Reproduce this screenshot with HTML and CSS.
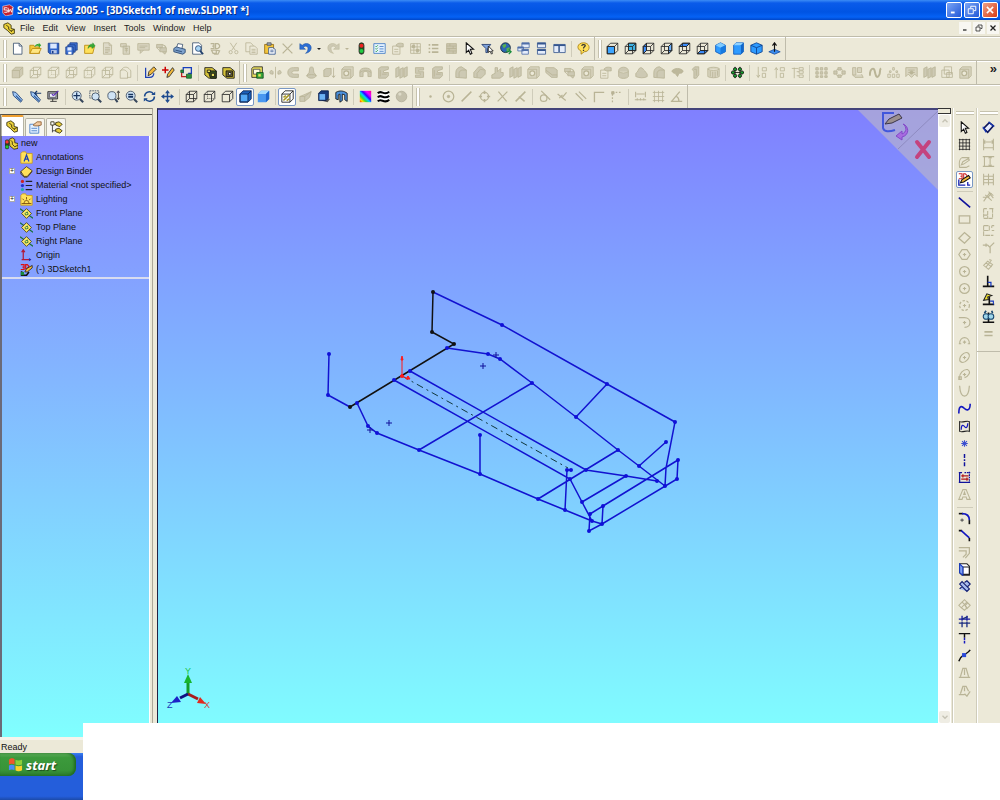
FILE: index.html
```html
<!DOCTYPE html>
<html lang="en">
<head>
  <meta charset="UTF-8">
  <meta name="viewport" content="width=device-width, initial-scale=1.0">
  <title>SolidWorks 2005 - [3DSketch1 of new.SLDPRT *]</title>
  <link rel="stylesheet" href="styles.css">
</head>
<body>
  <!-- Icon set -->
  <svg class="sprite" aria-hidden="true">
    <!-- Files -->
    <symbol id="new" viewBox="0 0 16 16"><path d="M3 1.500h7l3.500 3.500v10H3z" fill="#fff" stroke="#39506e"/><path d="M10 1.500V5h3.500" stroke="#39506e"/></symbol>
    <symbol id="open" viewBox="0 0 16 16"><path d="M1 14V4h5l1 2h6v8z" fill="#f5c83a" stroke="#b8860b"/><path d="M1 14l3-6h11l-3 6z" fill="#ffe680" stroke="#b8860b"/><path d="M7 6c1-4 4-4 5-3V1l3 3-3 3V5c-2-1-3 0-5 1z" fill="#2fa52f" stroke="none"/></symbol>
    <symbol id="openpart" viewBox="0 0 16 16"><path d="M2 14V4h6l1 2h5l-2 8z" fill="#ffe15a" stroke="#b8860b"/><path d="M6 8c1-5 4-6 6-5V1l3 4-4 3V6c-2-1-3 0-5 2z" fill="#35ab35" stroke="#1d7d1d" stroke-width=".5"/></symbol>
    <symbol id="save" viewBox="0 0 16 16"><path d="M1.500 1.500h13v13h-11l-2-2z" fill="#2f63c8" stroke="#173a86"/><path d="M4 2h8v6H4z" fill="#dbe8ff" stroke="none"/><path d="M5 10h7v4H5z" fill="#b9c8e8" stroke="none"/><path d="M6 11h2v3H6z" fill="#173a86" stroke="none"/></symbol>
    <symbol id="saveall" viewBox="0 0 16 16"><g fill="#3f74d6" stroke="#173a86"><path d="M6 1h9v9H6z"/><path d="M3.500 3.500h9v9h-9z"/><path d="M1 6h9v9H1z"/></g><path d="M3 6.500h5v4H3z" fill="#dbe8ff" stroke="none"/><path d="M4 12h4v3H4z" fill="#fff" stroke="none"/></symbol>
    <symbol id="doc" viewBox="0 0 16 16"><path d="M3 1h7l3 3v11H3zM10 1v3h3M5 7h6M5 9h6M5 11h6M5 13h4" fill="#dedac8"/></symbol>
    <symbol id="doc2" viewBox="0 0 16 16"><path d="M2 2h7v4H2zM5 5h8v10H5z" fill="#d8d4c0"/><path d="M7 8h4M7 10h4M9 7v6"/></symbol>
    <symbol id="card" viewBox="0 0 16 16"><path d="M1 2h14v8H1zM3 5h10M3 7h7M4 10v4l4-4" fill="#d8d4c0"/></symbol>
    <symbol id="blocks" viewBox="0 0 16 16"><path d="M2 3h7v4H2zM6 7h8v5H6zM9 3l4 2v2M9 12l3 3 2-3M2 7l4 4" fill="#cdc9b3"/></symbol>
    <symbol id="print" viewBox="0 0 16 16"><path d="M4 8l2-6 6 1-1 5" fill="#fff" stroke="#39506e"/><path d="M1 8l3-2 11 3v4l-3 2L1 12z" fill="#7fa3cd" stroke="#21406b"/><path d="M3 10l8 2" stroke="#21406b"/></symbol>
    <symbol id="preview" viewBox="0 0 16 16"><path d="M2 1h8l3 3v11H2z" fill="#fff" stroke="#39506e"/><circle cx="9" cy="8" r="3.500" fill="#a8d4f5" stroke="#21406b"/><path d="M11 11l4 4" stroke="#21406b" stroke-width="2"/></symbol>
    <symbol id="threed" viewBox="0 0 16 16"><path d="M2 2h4v3H4h2v3H2M8 2h3l2 2v2l-2 2H8zM3 10h6v4H5zM9 10l4 1-2 4H6" stroke-width="1.500"/></symbol>
    <symbol id="cut" viewBox="0 0 16 16"><path d="M4 1l6 9M12 1L6 10"/><circle cx="4.500" cy="12.500" r="2"/><circle cx="11.500" cy="12.500" r="2"/></symbol>
    <symbol id="copy" viewBox="0 0 16 16"><path d="M1 1h6l3 3v8H1z"/><path d="M6 5h6l3 3v7H6z" fill="#ece9d8"/><path d="M8 9h5M8 11h5M8 13h5"/></symbol>
    <symbol id="paste" viewBox="0 0 16 16"><path d="M2 3h11v11H2z" fill="#f2c53b" stroke="#946a10"/><path d="M5 1h5v3H5z" fill="#9aa7bb" stroke="#555"/><path d="M7 7h5l3 2v6H7z" fill="#fff" stroke="#2b4f8c"/><path d="M9 10h4M9 12h4" stroke="#2b4f8c"/></symbol>
    <symbol id="del" viewBox="0 0 16 16"><path d="M2 2l12 12M14 2L2 14" stroke-width="1.600"/></symbol>
    <symbol id="undo" viewBox="0 0 16 16"><path d="M1 2v7h7L5.500 6.500C8 4 11 5 11 8s-1 4-3 6c5-1 7-4 7-7 0-5-7-7-11-3z" fill="#2c6fd6" stroke="#174a9c" stroke-width=".6"/></symbol>
    <symbol id="redo" viewBox="0 0 16 16"><path d="M15 2v7H8l2.500-2.500C8 4 5 5 5 8s1 4 3 6c-5-1-7-4-7-7 0-5 7-7 11-3z" fill="#cdc9b3" stroke-width=".6"/></symbol>
    <symbol id="traffic" viewBox="0 0 16 16"><rect x="5" y="1" width="6" height="14" rx="3" fill="#225522" stroke="#222"/><circle cx="8" cy="4.500" r="2.500" fill="#e22" stroke="none"/><circle cx="8" cy="11" r="2.500" fill="#2c4" stroke="none"/></symbol>
    <symbol id="options" viewBox="0 0 16 16"><path d="M1 2h14v12H1z" fill="#e5f2ff" stroke="#3d77c4"/><path d="M3 5l1 1 2-2M3 8l1 1 2-2M3 11l1 1 2-2" stroke="#1c9c3a"/><path d="M8 5.500h5M8 8.500h5M8 11.500h5" stroke="#3d77c4"/></symbol>
    <symbol id="props" viewBox="0 0 16 16"><path d="M2 5h9v10H2z"/><path d="M6 4c2-3 5-3 9-2v4H9z" fill="#cdc9b3"/><path d="M4 9h5M4 12h5"/></symbol>
    <symbol id="table" viewBox="0 0 16 16"><path d="M2 2h12v12H2zM2 6h12M2 10h12M6 2v12M10 2v12"/><path d="M4 4h3v3H4zM9 9h3v3H9z" fill="currentColor"/></symbol>
    <symbol id="tree" viewBox="0 0 16 16"><path d="M6 3.500h8M6 8h8M6 12.500h8M2 3.500h2M2 8h2M2 12.500h2" stroke-width="2"/></symbol>
    <symbol id="brick" viewBox="0 0 16 16"><path d="M2 2h12v12H2z" fill="#cbc6ae"/><path d="M2 5h12M2 8h12M2 11h12M6 2v3M10 5v3M5 8v3M10 11v3"/></symbol>
    <symbol id="arrow" viewBox="0 0 16 16"><path d="M4 1v12l3-3 2 5 2-1-2-5h4z" fill="#fff" stroke="#111" stroke-width="1.300"/></symbol>
    <symbol id="filter" viewBox="0 0 16 16"><path d="M1 3h11L8 8v5H6V8z" fill="#7fa3dd" stroke="#1c3567"/><path d="M9 5v8l2-2 2 4 1-1-1-3h2z" fill="#fff" stroke="#111"/></symbol>
    <symbol id="globe" viewBox="0 0 16 16"><circle cx="8" cy="7" r="6" fill="#2c66b4" stroke="#123"/><path d="M4 4l4-2 1 3-3 3zM9 8l4-2v4l-3 2z" fill="#56b04e" stroke="none"/><path d="M8 12h7M12 9l3 3-3 3" stroke="#1a8c3c" stroke-width="1.500"/></symbol>
    <symbol id="cascade" viewBox="0 0 16 16"><g fill="#e4ecfa" stroke="#4f6ea8"><path d="M6 1h9v6H6zM1 6h7v5H1zM6 9h8v6H6z"/><path d="M6 2h9M1 7h7M6 10h8" stroke-width="2"/></g></symbol>
    <symbol id="tileh" viewBox="0 0 16 16"><g fill="#e4ecfa" stroke="#35568f"><path d="M3 1h10v6H3zM3 9h10v6H3z"/><path d="M3 2h10M3 10h10" stroke-width="2"/></g></symbol>
    <symbol id="tilev" viewBox="0 0 16 16"><g fill="#e4ecfa" stroke="#35568f"><path d="M1 3h6v10H1zM8 3h7v10H8z"/><path d="M1 4h14" stroke-width="2"/></g></symbol>
    <symbol id="help" viewBox="0 0 16 16"><path d="M8 1c9 0 9 11 1 11l-4 3v-4C-1 9 0 1 8 1z" fill="#ffdf5a" stroke="#a67c0c"/><path d="M6 5c0-3 5-2 4 0-.5 1-2 1-2 3M8 9.500v1.500" stroke="#333" stroke-width="1.500"/></symbol>
    <!-- Standard views -->
    <symbol id="cube" viewBox="0 0 16 16"><path d="M1.500 5.500h9v9h-9zM5.500 1.500h9v9M5.500 1.500v9h9M1.500 5.500l4-4M10.500 5.500l4-4M10.500 14.500l4-4M1.500 14.500l4-4"/></symbol>
    <symbol id="cubesolid" viewBox="0 0 16 16"><path d="M1.500 5.500h9v9h-9zM1.500 5.500l4-4h9v9l-4 4M10.500 5.500l4-4"/></symbol>
    <symbol id="cubehidden" viewBox="0 0 16 16"><path d="M1.500 5.500h9v9h-9zM1.500 5.500l4-4h9v9l-4 4M10.500 5.500l4-4"/><path d="M5.500 2v8.500h9M1.500 14.500l4-4" stroke-dasharray="1 1.500"/></symbol>
    <symbol id="cubegrey" viewBox="0 0 16 16"><path d="M1.500 5.500h9v9h-9zM1.500 5.500l4-4h9v9l-4 4M10.500 5.500l4-4" fill="#cfcab3"/></symbol>
    <symbol id="cubering" viewBox="0 0 16 16"><path d="M1.500 6l4-4c3-1 6-1 9 4v8h-4v1h-9zM1.500 6c3-2 6-2 9 2v7"/></symbol>
    <symbol id="vfront" viewBox="0 0 16 16"><path d="M1.500 5.500h9v9h-9z" fill="#3da5ff"/><path d="M1.500 5.500h9v9h-9zM1.500 5.500l4-4h9v9l-4 4M10.500 5.500l4-4"/></symbol>
    <symbol id="vback" viewBox="0 0 16 16"><path d="M5.500 1.500h9v9h-9z" fill="#3fb4e6"/><use href="#cube"/></symbol>
    <symbol id="vleft" viewBox="0 0 16 16"><path d="M1.500 5.500l4-4v9l-4 4z" fill="#3d90ff"/><use href="#cube"/></symbol>
    <symbol id="vright" viewBox="0 0 16 16"><path d="M10.500 5.500l4-4v9l-4 4z" fill="#6cb2ff"/><use href="#cube"/></symbol>
    <symbol id="vtop" viewBox="0 0 16 16"><path d="M1.500 5.500l4-4h9l-4 4z" fill="#3d90ff"/><use href="#cube"/></symbol>
    <symbol id="vbottom" viewBox="0 0 16 16"><path d="M1.500 14.500l4-4h9l-4 4z" fill="#3d90ff"/><use href="#cube"/></symbol>
    <symbol id="iso" viewBox="0 0 16 16"><path d="M8 1l6 3v8l-6 3-6-3V4z" fill="#2e9bff" stroke="#0b55b8"/><path d="M8 1l6 3-6 3-6-3z" fill="#7fcbff" stroke="none"/><path d="M8 7v8l6-3V4z" fill="#167ae0" stroke="none"/></symbol>
    <symbol id="tri" viewBox="0 0 16 16"><path d="M2 4l3-3h9v11l-3 3H2z" fill="#2e9bff" stroke="#0b55b8"/><path d="M2 4l3-3h9l-3 3z" fill="#8fd2ff" stroke="none"/><path d="M11 4l3-3v11l-3 3z" fill="#1267c8" stroke="none"/></symbol>
    <symbol id="dim" viewBox="0 0 16 16"><path d="M1 4l7-3 7 3v8l-7 3-7-3z" fill="#2e9bff" stroke="#0b3d8a"/><path d="M1 4l7 3 7-3M8 7v8" stroke="#0b3d8a"/></symbol>
    <symbol id="normal" viewBox="0 0 16 16"><path d="M1 12l7-3 7 3-7 3z" fill="#3c8ef0" stroke="#1d4f9c"/><path d="M8 12V2M5.500 4.500L8 1l2.500 3.500" stroke="#111" stroke-width="1.400"/></symbol>
    <!-- Sketch and features -->
    <symbol id="sketch" viewBox="0 0 16 16"><path d="M2 2v12h5c4 0 5-3 5-5" stroke="#1b3fb5" stroke-width="1.500"/><path d="M5 12l1-5 6-6 3 3-6 6z" fill="#f2b93c" stroke="#222"/></symbol>
    <symbol id="sketch3d" viewBox="0 0 16 16"><path d="M0 5h8M4 1v8" stroke="#c00" stroke-width="1.800"/><path d="M6 14l1-4 6-8 2 3-6 8z" fill="#f2b93c" stroke="#222"/></symbol>
    <symbol id="derive" viewBox="0 0 16 16"><path d="M4 9V2h10v7h-4" stroke="#173fbc" stroke-width="1.600"/><path d="M2 7v6h6" stroke="#b22" stroke-width="1.600"/><path d="M8 10h6v5H8zM1 5h3v3H1z" fill="#2a8f3c" stroke="#185f27"/></symbol>
    <symbol id="frameA" viewBox="0 0 16 16"><path d="M1 2h9l5 4v9H6l-5-4z" fill="#d6c33a" stroke="#111"/><path d="M5 6h10v9H8z" fill="#3d551f" stroke="#111"/><path d="M4 5h4v3H4zM9 9h4v4H9z" fill="#e8dc5c" stroke="#111"/></symbol>
    <symbol id="frameB" viewBox="0 0 16 16"><path d="M1 2h9l5 4v9H6l-5-4z" fill="#d6c33a" stroke="#111"/><path d="M5 6h8v7H5z" fill="#6d6530" stroke="#111"/><path d="M8 8h3v3H8z" fill="#fff" stroke="#111"/></symbol>
    <symbol id="extrude" viewBox="0 0 16 16"><path d="M1 3l2-2h11v9l-2 4H1z" fill="#ece15e" stroke="#222"/><path d="M3 4h8v6H3z" fill="#fffbe0" stroke="#444"/><path d="M7 8h8v7H7z" fill="#36a53a" stroke="#104a15"/><path d="M9 10h3v3H9z" fill="#ece15e" stroke="none"/></symbol>
    <symbol id="revolve" viewBox="0 0 16 16"><path d="M8 1v14M3 5c-3 3-3 5 2 5V7zM13 5c3 3 3 5-2 5V7z" fill="#cdc9b3"/></symbol>
    <symbol id="sweep" viewBox="0 0 16 16"><path d="M14 2H8C2 2 1 6 1 8s1 6 7 6h6v-4H9c-4 0-4-4 0-4h5z" fill="#cdc9b3"/></symbol>
    <symbol id="loft" viewBox="0 0 16 16"><path d="M6 2c1-1 3-1 4 0l1 6 3 4c-2 4-10 4-12 0l3-4z" fill="#cdc9b3"/><path d="M2 12c3-2 9-2 12 0"/></symbol>
    <symbol id="thick" viewBox="0 0 16 16"><path d="M1 5l3-2h6v7l-3 3H1zM13 2v12M11 12l2 2 2-2" fill="#cdc9b3"/></symbol>
    <symbol id="hole" viewBox="0 0 16 16"><path d="M1 4l3-3h11v11l-3 3H1zM1 4h11v11" fill="#d8d4bf"/><circle cx="6.500" cy="9" r="3" fill="#ece9d8" stroke-width="1.500"/></symbol>
    <symbol id="arch" viewBox="0 0 16 16"><path d="M1 13V7c0-6 14-6 14 0v6h-4V9c0-3-6-3-6 0v4z" fill="#cdc9b3"/><path d="M1 8c4-3 10-3 14 0"/></symbol>
    <symbol id="cutbox" viewBox="0 0 16 16"><path d="M2 3l3-2h9v3l-6 2v2h6v4l-3 3H2z" fill="#cdc9b3"/><path d="M4 5v8M6 10h6"/></symbol>
    <symbol id="ribs" viewBox="0 0 16 16"><path d="M1 3l4-2v11l-4 2zM6 4l4-2v11l-4 2zM11 3l4-2v11l-4 2z" fill="#cdc9b3"/></symbol>
    <symbol id="sshape" viewBox="0 0 16 16"><path d="M3 2h10v3H7v2h6v7H3v-3h6V9H3z" fill="#cdc9b3"/></symbol>
    <symbol id="fillet" viewBox="0 0 16 16"><path d="M1 14V8c0-4 3-7 7-7l6 4v10z" fill="#cdc9b3"/><path d="M5 14V9c0-2 2-4 4-4h5"/></symbol>
    <symbol id="chamfer" viewBox="0 0 16 16"><path d="M1 14V8l6-7h3l5 4v5l-5 5z" fill="#cdc9b3"/><path d="M5 14V9l4-5 5 1"/></symbol>
    <symbol id="rib" viewBox="0 0 16 16"><path d="M1 11l4-2V2h3v5l4-4v5h3v4l-4 3H1z" fill="#cdc9b3"/></symbol>
    <symbol id="cutcorner" viewBox="0 0 16 16"><path d="M1 2h10l4 3v9H8L1 8z" fill="#cdc9b3"/><path d="M1 5l8 6h6"/></symbol>
    <symbol id="dome" viewBox="0 0 16 16"><path d="M2 6c0-6 12-6 12 0v7c-2 3-10 3-12 0zM2 7c3 2 9 2 12 0" fill="#cdc9b3"/></symbol>
    <symbol id="hill" viewBox="0 0 16 16"><path d="M1 13V9c3-1 3-7 6-7s3 3 5 4l3 4v3c-3 2-10 2-14 0z" fill="#cdc9b3"/></symbol>
    <symbol id="leaf" viewBox="0 0 16 16"><path d="M1 6c4-4 10-4 14 0-1 3-3 3-5 3l-2 4-3-4C3 9 2 8 1 6z" fill="#bdb89b"/></symbol>
    <symbol id="clip" viewBox="0 0 16 16"><path d="M4 4l3-3h5v10l-3 4H6V7z" fill="#cdc9b3"/><path d="M6 4h3v8"/></symbol>
    <symbol id="barrel" viewBox="0 0 16 16"><path d="M1 3c3-2 11-2 14 0v10c-3 2-11 2-14 0zM1 4c3 2 11 2 14 0M4 6v7M7 7v7M10 7v7M13 6v6" fill="#d8d4bf"/></symbol>
    <symbol id="pattern" viewBox="0 0 16 16"><path d="M5 1v14M11 1v14M0 8h16" stroke="#111"/><g fill="#17a32e" stroke="#111"><circle cx="5" cy="4" r="2"/><circle cx="11" cy="4" r="2"/><circle cx="2.500" cy="8" r="2"/><circle cx="13.500" cy="8" r="2"/><circle cx="5" cy="12" r="2"/><circle cx="11" cy="12" r="2"/></g></symbol>
    <symbol id="down" viewBox="0 0 16 16"><path d="M4 1v13M2 11l2 3 2-3M9 2h5v4H9zM9 9h4v5H9z" /></symbol>
    <symbol id="up" viewBox="0 0 16 16"><path d="M4 15V2M2 5l2-3 2 3M9 2h5v4H9zM9 9h4v5H9z"/></symbol>
    <symbol id="updown" viewBox="0 0 16 16"><path d="M1 3h8M4 15V2M7 7h3M7 12h3M10 2h5v3h-5zM10 6h5v3h-5zM10 11h5v3h-5z"/></symbol>
    <symbol id="dots" viewBox="0 0 16 16"><path d="M1 2h3v3H1zM6.500 2h3v3h-3zM12 2h3v3h-3zM1 7h3v3H1zM6.500 7h3v3h-3zM12 7h3v3h-3zM1 12h3v2H1zM6.500 12h3v2h-3zM12 12h3v2h-3z" fill="#cdc9b3"/></symbol>
    <symbol id="ring" viewBox="0 0 16 16"><path d="M6 2h4v3H6zM6 11h4v3H6zM1 6h4v4H1zM11 6h4v4h-4zM4 5l2-1M12 5l-2-1M4 11l2 1M12 11l-2 1" fill="#cdc9b3"/></symbol>
    <symbol id="mirror" viewBox="0 0 16 16"><path d="M2 2h4v9H2zM8 2h5v6H8zM2 11l3 3h10l-2-4" fill="#d8d4bf"/></symbol>
    <symbol id="curve" viewBox="0 0 16 16"><path d="M1 12C1 3 6 1 7 6s2 10 5 6 0-8 3-9" stroke-width="2.500"/></symbol>
    <symbol id="peaks" viewBox="0 0 16 16"><path d="M1 10h3v4H1zM6.500 10h3v4h-3zM12 10h3v4h-3zM3 6h2v2H3zM11 6h2v2h-2zM7 2h2v3H7z"/></symbol>
    <symbol id="fill" viewBox="0 0 16 16"><path d="M1 2h14v11l-3-3-4 4-4-4-3 3zM4 5h8M4 8h8" fill="#d8d4bf"/><circle cx="8" cy="8" r="2" fill="currentColor"/></symbol>
    <symbol id="stack" viewBox="0 0 16 16"><path d="M4 1h9v9H4zM1 5h9v9H1zM7 8h7v6H7z"/></symbol>
    <!-- View toolbar -->
    <symbol id="torch" viewBox="0 0 16 16"><path d="M2 2l4 1 8 9-2 3-9-8z" fill="#9ec6f5" stroke="#17396e"/><path d="M6 7l6 6" stroke="#2e5c9c" stroke-width="1.500"/></symbol>
    <symbol id="torchback" viewBox="0 0 16 16"><use href="#torch"/><path d="M7 4h8M10 1L7 4l3 3" stroke="#17396e" stroke-width="1.500"/></symbol>
    <symbol id="monitor" viewBox="0 0 16 16"><path d="M1 2h12v9H1zM4 14h8M7 11v3" fill="#a6a8b6" stroke="#222"/><path d="M3 4h8v5H3z" fill="#eef" stroke="#555"/><path d="M8 7l6-6M6 5l2 2" stroke="#5a2bb5" stroke-width="1.500"/></symbol>
    <symbol id="zoomfit" viewBox="0 0 16 16"><circle cx="7" cy="7" r="5.500" fill="#cfe3f5" stroke="#37475c"/><path d="M11 11l4 4" stroke="#37475c" stroke-width="2.500"/><path d="M7 3v8M3 7h8" stroke="#16335e" stroke-width="1.500"/></symbol>
    <symbol id="zoomarea" viewBox="0 0 16 16"><path d="M1 1h11v9H1z" stroke="#37475c" stroke-dasharray="2 1"/><circle cx="8" cy="8" r="4.500" fill="#cfe3f5" stroke="#37475c"/><path d="M11 11l4 4" stroke="#37475c" stroke-width="2.500"/></symbol>
    <symbol id="zoominout" viewBox="0 0 16 16"><circle cx="6" cy="7" r="5" fill="#cfe3f5" stroke="#37475c"/><path d="M10 11l3 4" stroke="#37475c" stroke-width="2.500"/><path d="M14 2v9M12.500 3.500L14 1l1.500 2.500M12.500 9.500L14 12l1.500-2.500" stroke="#222"/></symbol>
    <symbol id="zoomsel" viewBox="0 0 16 16"><circle cx="7" cy="7" r="5.500" fill="#cfe3f5" stroke="#37475c"/><path d="M11 11l4 4" stroke="#37475c" stroke-width="2.500"/><path d="M4 5.500h6M4 8.500h6" stroke="#16335e" stroke-width="2"/></symbol>
    <symbol id="rotate" viewBox="0 0 16 16"><path d="M2 8c0-6 8-8 11-3M14 8c0 6-8 8-11 3" stroke="#1f4c8f" stroke-width="2"/><path d="M10 6h5V2zM6 10H1v4z" fill="#1f4c8f" stroke="none"/></symbol>
    <symbol id="pan" viewBox="0 0 16 16"><path d="M8 2v12M2 8h12" stroke="#1f4c8f" stroke-width="1.800"/><path d="M8 0l3 4H5zM8 16l3-4H5zM0 8l4-3v6zM16 8l-4-3v6z" fill="#1f4c8f" stroke="none"/></symbol>
    <symbol id="shadededge" viewBox="0 0 16 16"><path d="M1 5l4-4h10v10l-4 4H1z" fill="#1b62bd" stroke="#0a1f4a"/><path d="M1.500 5h9.500v9.500H1.500z" fill="#53a8f5" stroke="#0a1f4a"/><path d="M11 5l4-4" stroke="#0a1f4a"/></symbol>
    <symbol id="shaded" viewBox="0 0 16 16"><path d="M1 5l4-4h10v10l-4 4H1z" fill="#4a98f0" stroke="none"/><path d="M1 5l4-4h10l-4 4z" fill="#a5dbff" stroke="none"/><path d="M11 5l4-4v10l-4 4z" fill="#1c66cc" stroke="none"/></symbol>
    <symbol id="section" viewBox="0 0 16 16"><path d="M1 5l4-4h10v10l-4 4H1z" fill="#fff" stroke="#111"/><path d="M1 5h10v10M11 5l4-4" stroke="#111"/><path d="M3 13l7-7M3 9l3-2M7 13l3-2" stroke="#a89620" stroke-width="1.800"/></symbol>
    <symbol id="persp" viewBox="0 0 16 16"><path d="M1 8l5-2 9-4-2 7-6 5H1z" fill="#cdc9b3"/><path d="M1 8h6v6M7 8l8-6"/></symbol>
    <symbol id="shadow" viewBox="0 0 16 16"><path d="M5 13l8 2 3-4-3-1z" fill="#555" stroke="none"/><path d="M2 4l3-3h9v9l-3 3H2z" fill="#183a7c" stroke="#0a1f4a"/><path d="M3 5h7v7H3z" fill="#6cb2f5" stroke="none"/></symbol>
    <symbol id="drape" viewBox="0 0 16 16"><path d="M1 3c5-3 10-2 14 1v10l-3-2V6L9 5v8l-3 2V5L4 6v6l-3-1z" fill="#4a90dc" stroke="#111"/></symbol>
    <symbol id="zebra" viewBox="0 0 16 16"><path d="M1 1h14v14H1z" fill="#fff" stroke="none"/><path d="M1 4c4-5 8 4 14-2M1 9c4-5 8 4 14-2M1 14c4-5 8 4 14-2" stroke="#000" stroke-width="2.600"/></symbol>
    <symbol id="ball" viewBox="0 0 16 16"><circle cx="8" cy="8" r="6.500" fill="#c4c0ab" stroke="#b3af9a"/><circle cx="6" cy="5" r="2" fill="#dedbc9" stroke="none"/></symbol>
    <linearGradient id="rainbow" x1="1" y1="0" x2="0" y2="1"><stop offset="0" stop-color="#f08"/><stop offset=".25" stop-color="#e0f"/><stop offset=".42" stop-color="#30f"/><stop offset=".55" stop-color="#0cf"/><stop offset=".7" stop-color="#3d3"/><stop offset=".85" stop-color="#fd0"/><stop offset="1" stop-color="#f20"/></linearGradient>
    <symbol id="curvature" viewBox="0 0 16 16"><path d="M1 1h14v14H1z" fill="url(#rainbow)" stroke="none"/></symbol>
    <!-- Sketch snaps -->
    <symbol id="point" viewBox="0 0 16 16"><circle cx="8" cy="8" r="1.500" fill="currentColor" stroke="none"/></symbol>
    <symbol id="center" viewBox="0 0 16 16"><circle cx="8" cy="8" r="6.500" stroke-width="1.500"/><circle cx="8" cy="8" r="1.500" fill="currentColor"/></symbol>
    <symbol id="midline" viewBox="0 0 16 16"><path d="M2 14L14 2" stroke-width="1.800"/></symbol>
    <symbol id="quad" viewBox="0 0 16 16"><circle cx="8" cy="8" r="5" stroke-width="1.500"/><path d="M8 1v4M8 11v4M1 8h4M11 8h4" stroke-width="2"/></symbol>
    <symbol id="cross" viewBox="0 0 16 16"><path d="M3 2l10 12M14 2L2 14" stroke-width="1.500"/></symbol>
    <symbol id="near" viewBox="0 0 16 16"><path d="M2 14L14 2M6 8l7 6" stroke-width="1.800"/></symbol>
    <symbol id="tangent" viewBox="0 0 16 16"><circle cx="7" cy="10" r="4" stroke-width="1.500"/><path d="M4 1l11 11" stroke-width="1.500"/></symbol>
    <symbol id="perp" viewBox="0 0 16 16"><path d="M2 5l10 8M13 3l-6 7M4 10l4-4" stroke-width="1.500"/></symbol>
    <symbol id="parallel" viewBox="0 0 16 16"><path d="M2 4l9 9M6 2l9 9" stroke-width="1.500"/></symbol>
    <symbol id="hv" viewBox="0 0 16 16"><path d="M3 15V3h12" stroke-width="1.600"/></symbol>
    <symbol id="hvpts" viewBox="0 0 16 16"><path d="M3 15V3h12" stroke-dasharray="2 2" stroke-width="1.500"/><path d="M2 2h3v3H2z" fill="currentColor"/></symbol>
    <symbol id="length" viewBox="0 0 16 16"><path d="M2 2v7M14 2v7M3 5h10M1 12h14M4 10v3M8 10v3M12 10v3" stroke-width="1.300"/></symbol>
    <symbol id="grid" viewBox="0 0 16 16"><path d="M1 2h14M1 6h14M1 10h14M1 14h14M2 1v14M6 1v14M10 1v14M14 1v14" stroke-width="1"/></symbol>
    <symbol id="gridsnap" viewBox="0 0 16 16"><path d="M1 3h14M1 8h14M1 13h14M3 1v14M8 1v14M13 1v14"/></symbol>
    <symbol id="angle" viewBox="0 0 16 16"><path d="M1 14h14M2 14L12 2M11 14c0-3-1-5-3-6" stroke-width="1.600"/></symbol>
    <!-- Right-hand toolbars -->
    <symbol id="sketchoff" viewBox="0 0 16 16"><path d="M14 2H5C1 4 1 8 2 14h8l4-2M4 11l2-4 7-4 1 2-7 5z"/></symbol>
    <symbol id="sketch3dbig" viewBox="0 0 16 16"><path d="M1 1h4v3H3h2v3H1M7 1h2l2 2v2L9 7H7z" stroke="#c22"/><path d="M1 8v7h8M12 11v4h3" stroke="#1520b0" stroke-width="1.600"/><path d="M3 12l2-4 8-5 2 3-8 5z" fill="#f2b93c" stroke="#111"/></symbol>
    <symbol id="line" viewBox="0 0 16 16"><path d="M1 2l14 12" stroke="#10129c" stroke-width="2"/></symbol>
    <symbol id="rect" viewBox="0 0 16 16"><path d="M1.500 3.500h13v9h-13z" stroke-width="1.600"/></symbol>
    <symbol id="diamond" viewBox="0 0 16 16"><path d="M1 9l7-7 7 6-7 7z" stroke-width="1.600"/></symbol>
    <symbol id="polygon" viewBox="0 0 16 16"><path d="M5 2h6l4 6-4 6H5L1 8zM8 6v4M6 8h4" stroke-width="1.400"/></symbol>
    <symbol id="circle" viewBox="0 0 16 16"><circle cx="8" cy="8" r="6" stroke-width="1.500"/><path d="M8 6v4M6 8h4"/></symbol>
    <symbol id="dashcircle" viewBox="0 0 16 16"><circle cx="8" cy="8" r="6" stroke-width="1.500" stroke-dasharray="3 2"/><path d="M8 6v4M6 8h4"/></symbol>
    <symbol id="arc" viewBox="0 0 16 16"><path d="M1 2h7c9 0 9 12 0 12M8 6v4M6 8h4" stroke-width="1.500"/></symbol>
    <symbol id="arc3" viewBox="0 0 16 16"><path d="M2 12c0-10 12-10 12 0M8 8v4M6 10h4M1 12h3M12 12h3" stroke-width="1.400"/></symbol>
    <symbol id="ellipse" viewBox="0 0 16 16"><ellipse cx="8" cy="8" rx="7" ry="4.500" transform="rotate(-45 8 8)" stroke-width="1.500"/><path d="M6 8h4M8 6v4"/></symbol>
    <symbol id="pellipse" viewBox="0 0 16 16"><path d="M2 13C1 7 7 1 12 2c5 3 0 9-4 10M6 8h4M8 6v4M1 11h3v3H1z" stroke-width="1.400"/></symbol>
    <symbol id="parabola" viewBox="0 0 16 16"><path d="M2 1c1 17 11 17 12 0" stroke-width="1.500"/></symbol>
    <symbol id="spline" viewBox="0 0 16 16"><path d="M1 14C1 2 6 6 8 8s7 4 7-6" stroke="#1418c0" stroke-width="2"/></symbol>
    <symbol id="splinesurf" viewBox="0 0 16 16"><path d="M2 2c4 2 8-2 12 0v12c-4-2-8 2-12 0z" stroke="#222"/><path d="M4 12c0-9 4-4 5-3s3 0 3-5" stroke="#1418c0" stroke-width="1.500"/></symbol>
    <symbol id="star" viewBox="0 0 16 16"><path d="M8 4v8M4 8h8M5 5l6 6M11 5l-6 6" stroke="#3a4fd0"/></symbol>
    <symbol id="centerline" viewBox="0 0 16 16"><path d="M8 0v16" stroke="#10129c" stroke-width="1.800" stroke-dasharray="5 1.500 2 1.500"/></symbol>
    <symbol id="convert" viewBox="0 0 16 16"><path d="M1 2h4M1 14h14M2 2v12" stroke="#10129c" stroke-width="1.600"/><path d="M14 1v13M8 2h7" stroke="#10129c" stroke-dasharray="2 1" stroke-width="1.500"/><path d="M4 6h9M4 10h9M6 4v4M11 8v4" stroke="#b01818" stroke-width="1.500"/></symbol>
    <symbol id="texta" viewBox="0 0 16 16"><path d="M1 14L6 2h4l5 12h-4l-1-3H6l-1 3zM7 8h2L8 5z"/></symbol>
    <symbol id="sfillet" viewBox="0 0 16 16"><path d="M1 2h5" stroke="#111" stroke-width="2"/><path d="M5 2c6 0 9 3 9 8" stroke="#1418c0" stroke-width="2"/><path d="M14 10v5" stroke="#111" stroke-width="2"/><path d="M5 8v4M3 10h4" stroke="#555"/></symbol>
    <symbol id="schamfer" viewBox="0 0 16 16"><path d="M1 2h4M14 11v4" stroke="#111" stroke-width="2"/><path d="M4 2l10 9" stroke="#1418c0" stroke-width="2"/></symbol>
    <symbol id="offset" viewBox="0 0 16 16"><path d="M1 2h13v7l-5 6M1 6h9v4l-4 4" stroke-width="1.500"/></symbol>
    <symbol id="convertent" viewBox="0 0 16 16"><path d="M2 1h9l3 3v11H5l-3-3z" stroke="#222" fill="#fff"/><path d="M6 5h8v9H6z" stroke="#222"/><path d="M2 1l4 4v10l-4-3z" fill="#7fa0f0" stroke="#1438c0"/></symbol>
    <symbol id="mirrorent" viewBox="0 0 16 16"><path d="M2 5l3-3 9 9-3 3zM2 11l3-3 6 6M8 3l3-2 4 4-3 3" fill="#a8bdf0" stroke="#101c70" stroke-width="1.400"/></symbol>
    <symbol id="spattern" viewBox="0 0 16 16"><path d="M1 9l4-4 3 3-4 4zM5 5l3-3 4 4-3 3zM8 8l3-3 4 4-4 4zM4 12l4-4 3 4-3 3z"/></symbol>
    <symbol id="trim" viewBox="0 0 16 16"><path d="M1 5h14M5 1v6M11 1v6" stroke="#1418a0" stroke-width="1.600"/><path d="M1 10h14M5 8v7M11 8v7M5 5l7-3" stroke="#1a2c80" stroke-width="1.600"/></symbol>
    <symbol id="extend" viewBox="0 0 16 16"><path d="M1 2h14M8 2v5" stroke="#111" stroke-width="1.800"/><path d="M8 7v8" stroke="#1418c0" stroke-width="1.800" stroke-dasharray="3 1"/></symbol>
    <symbol id="split" viewBox="0 0 16 16"><path d="M1 15C3 9 5 9 8 7s5-3 7-6" stroke="#111" stroke-width="1.800"/><path d="M5 5h5v5H5z" fill="#2a48d8" stroke="none"/></symbol>
    <symbol id="bell" viewBox="0 0 16 16"><path d="M1 14h14M3 13L6 3h4l3 10M8 4v7" stroke-width="1.500"/></symbol>
    <symbol id="bellcheck" viewBox="0 0 16 16"><path d="M1 13h7M3 12L6 3h4l3 6M8 4v5M8 12l3 3 4-6" stroke-width="1.500"/></symbol>
    <symbol id="smartdim" viewBox="0 0 16 16"><path d="M2 9l7-7 5 4-7 8z" stroke="#10185c" stroke-width="2" fill="#e8edff"/><path d="M1 7l4 7M8 1l7 6" stroke="#1438c0"/></symbol>
    <symbol id="hdim" viewBox="0 0 16 16"><path d="M2 1v14M14 1v14M2 5h12M4 3L2 5l2 2M12 3l2 2-2 2M2 12h12"/></symbol>
    <symbol id="vdim" viewBox="0 0 16 16"><path d="M1 2h14M1 14h14M10 2v12M8 4l2-2 2 2M8 12l2 2 2-2M3 2v12"/></symbol>
    <symbol id="basedim" viewBox="0 0 16 16"><path d="M2 1v14M14 1v14M8 1v14M2 4h12M2 8h12M2 12h12"/></symbol>
    <symbol id="orddim" viewBox="0 0 16 16"><path d="M2 14L9 4l5 6M4 6l8 7M1 9h8M8 2l6 5M7 9l5-5"/></symbol>
    <symbol id="hord" viewBox="0 0 16 16"><path d="M2 2v12h11V2M2 2h4M9 2h5M7 5v9M2 10h5" stroke-dasharray="5 1"/></symbol>
    <symbol id="vord" viewBox="0 0 16 16"><path d="M2 2v12h12M2 8h7M2 2h7M12 2h3M12 8h3M9 2v6M12 2v3" stroke-dasharray="6 1"/></symbol>
    <symbol id="cdim" viewBox="0 0 16 16"><path d="M1 5h6l3 3v7M15 2l-5 5M5 3v4" stroke-width="1.500"/></symbol>
    <symbol id="addrel" viewBox="0 0 16 16"><path d="M2 9l5-5 6 4-5 6zM5 6l7 5M5 11l6-7M9 2l3 1"/></symbol>
    <symbol id="relperp" viewBox="0 0 16 16"><path d="M1 14h14M7 1v13" stroke="#111" stroke-width="2"/><path d="M7 9h4v5" stroke="#1438c0" stroke-width="1.500"/></symbol>
    <symbol id="reladd" viewBox="0 0 16 16"><path d="M1 14h14M9 5v9" stroke="#111" stroke-width="2"/><path d="M10 10h4v4" stroke="#1438c0"/><path d="M2 9l4-8 6 2-5 2 1 3z" fill="#f0e030" stroke="#222"/></symbol>
    <symbol id="relview" viewBox="0 0 16 16"><path d="M1 15h14M8 3v11" stroke="#111" stroke-width="2"/><circle cx="5" cy="8" r="3.500" fill="#9fd6ea" stroke="#17466e"/><circle cx="11" cy="8" r="3.500" fill="#9fd6ea" stroke="#17466e"/><path d="M3 4l2-3M12 1l1 3" stroke="#17466e" stroke-width="2"/></symbol>
    <symbol id="equal" viewBox="0 0 16 16"><path d="M3 6h10M3 10.500h10" stroke-width="2"/></symbol>
    <!-- Feature tree -->
    <symbol id="part" viewBox="0 0 16 16"><path d="M1 3l5-2 4 3v4l4 1v5l-4 1-5-5-4-3z" fill="#ecd23c" stroke="#2d2708"/><path d="M4 4l3 2v3l4 3M10 11l4-2" stroke="#2d2708"/></symbol>
    <symbol id="parttree" viewBox="0 0 16 16"><path d="M5 3l4-2 3 2v4l4 1v6l-5 1-5-4z" fill="#ecd23c" stroke="#2d2708"/><path d="M7 4l2 2v3l3 3 4-2" stroke="#2d2708"/><rect x="0" y="3" width="5" height="12" rx="2" fill="#2b3b2b" stroke="none"/><circle cx="2.500" cy="6" r="2" fill="#f33" stroke="none"/><circle cx="2.500" cy="12" r="2" fill="#2c3" stroke="none"/></symbol>
    <symbol id="propmgr" viewBox="0 0 16 16"><path d="M1 4h11v11H1z" fill="#e4f1ff" stroke="#3d77c4"/><path d="M5 5l5-4h5v4l-4 1H7z" fill="#f0c9a0" stroke="#8b5a2b"/><path d="M3 9h7M3 12h7" stroke="#3d77c4"/></symbol>
    <symbol id="confmgr" viewBox="0 0 16 16"><path d="M3 1v13M3 4h5M3 12h5" stroke="#333"/><path d="M7 2l4-1 4 3-3 3-5-2zM7 10l4-1 4 3-3 3-5-2z" fill="#e6cc3b" stroke="#2d2708"/><path d="M1 1h4v4H1z" fill="#fff" stroke="#2d2708"/></symbol>
    <symbol id="annot" viewBox="0 0 16 16"><path d="M1 3l2-2h4l1 2h7v12H1z" fill="#ffe15a" stroke="#c99a16"/><path d="M5 13l3-8 3 8M6 10h4" stroke="#1a3fb0" stroke-width="1.500"/></symbol>
    <symbol id="binder" viewBox="0 0 16 16"><path d="M1 8l7-6 7 5-6 7H5z" fill="#ffe15a" stroke="#4a3a08"/><path d="M1 8v3l4 4h4l6-7" stroke="#4a3a08"/></symbol>
    <symbol id="material" viewBox="0 0 16 16"><path d="M7 3h8M7 8h8M7 13h8" stroke="#222" stroke-width="1.500"/><circle cx="3" cy="3" r="2" fill="#c22" stroke="none"/><circle cx="3" cy="8" r="2" fill="#23c" stroke="none"/><circle cx="3" cy="13" r="2" fill="#2aa" stroke="none"/></symbol>
    <symbol id="light" viewBox="0 0 16 16"><path d="M1 3l2-2h4l1 2h7v12H1z" fill="#ffe15a" stroke="#c99a16"/><path d="M5 13c0-5 6-5 6 0M8 5v3M3 7l2 2M13 7l-2 2M2 13h12" stroke="#6a3c00"/></symbol>
    <symbol id="plane" viewBox="0 0 16 16"><path d="M0 2l16 12" stroke="#187038" stroke-width="1.500"/><path d="M8 2l6 6-6 6-6-6z" fill="#ffe96a" stroke="#3d3908"/><path d="M6 8l3-2 1 3-3 1z" stroke="#187038"/></symbol>
    <symbol id="origin" viewBox="0 0 16 16"><path d="M4 2v11h9M2 4l2-3 2 3M2 13h4" stroke="#b01a3a" stroke-width="1.500"/><path d="M11 11l3 2-3 2z" fill="#1a2cb0" stroke="none"/></symbol>
    <symbol id="sk3d" viewBox="0 0 16 16"><path d="M1 2h4v3H3h2v3H1M7 2h2l2 2-2 3H7z" stroke="#d11" stroke-width="1.500"/><path d="M2 10v5h6l3-4" stroke="#111" stroke-width="2"/><path d="M6 11l2-4 7-4v3l-6 5z" fill="#f2b93c" stroke="#222"/><path d="M1 11h4v4H1z" fill="#1a8c3c" stroke="none"/></symbol>
  </svg>

  <!-- Title bar -->
  <header class="titlebar">
    <svg class="app-icon" viewBox="0 0 16 16"><path d="M1 3l9-2 5 3-1 10-9 2-4-4z" fill="#c5202c" stroke="#fff" stroke-width=".7"/><path d="M7 5H3v3h4v3H3M8 5l1 6 2-4 2 4 1-6" stroke="#fff" stroke-width="1.200" fill="none"/></svg>
    <h1>SolidWorks 2005 - [3DSketch1 of new.SLDPRT *]</h1>
    <div class="window-buttons">
      <button title="Minimize"><svg viewBox="0 0 16 16"><path d="M3 12h6" stroke-width="3"/></svg></button>
      <button title="Restore"><svg viewBox="0 0 16 16"><path d="M6 5V2h8v7h-3M2 6h8v8H2z" stroke-width="1.500"/></svg></button>
      <button class="close" title="Close"><svg viewBox="0 0 16 16"><path d="M3 3l10 10M13 3L3 13" stroke-width="2.500"/></svg></button>
    </div>
  </header>

  <!-- Menu bar -->
  <nav class="menubar">
    <svg class="doc-icon"><use href="#part"/></svg>
    <button>File</button>
    <button>Edit</button>
    <button>View</button>
    <button>Insert</button>
    <button>Tools</button>
    <button>Window</button>
    <button>Help</button>
    <div class="doc-buttons">
      <button title="Minimize document"><svg viewBox="0 0 16 16"><path d="M4 12h7" stroke-width="2.500"/></svg></button>
      <button title="Restore document"><svg viewBox="0 0 16 16"><path d="M6 5V2h8v7h-3M2 6h8v8H2z" stroke-width="1.500"/></svg></button>
      <button title="Close document"><svg viewBox="0 0 16 16"><path d="M3 3l10 10M13 3L3 13" stroke-width="2.500"/></svg></button>
    </div>
  </nav>

  <!-- Toolbars: standard, standard views -->
  <div class="toolbar-row">
    <div class="toolbar">
      <button title="New"><svg><use href="#new"/></svg></button>
      <button title="Open"><svg><use href="#open"/></svg></button>
      <button title="Save"><svg><use href="#save"/></svg></button>
      <button title="Save All"><svg><use href="#saveall"/></svg></button>
      <button title="Open Part"><svg><use href="#openpart"/></svg></button>
      <button title="Make Drawing" disabled><svg><use href="#doc"/></svg></button>
      <button title="Make Assembly" disabled><svg><use href="#doc2"/></svg></button>
      <button title="Note" disabled><svg><use href="#card"/></svg></button>
      <button title="Blocks" disabled><svg><use href="#blocks"/></svg></button>
      <button title="Print"><svg><use href="#print"/></svg></button>
      <button title="Print Preview"><svg><use href="#preview"/></svg></button>
      <button title="3D Content" disabled><svg><use href="#threed"/></svg></button>
      <button title="Cut" disabled><svg><use href="#cut"/></svg></button>
      <button title="Copy" disabled><svg><use href="#copy"/></svg></button>
      <button title="Paste"><svg><use href="#paste"/></svg></button>
      <button title="Delete" disabled><svg><use href="#del"/></svg></button>
      <button title="Undo"><svg><use href="#undo"/></svg></button>
      <button class="drop" title="Undo list"></button>
      <button title="Redo" disabled><svg><use href="#redo"/></svg></button>
      <button class="drop" title="Redo list" disabled></button>
      <button title="Rebuild"><svg><use href="#traffic"/></svg></button>
      <button title="Options"><svg><use href="#options"/></svg></button>
      <button title="Properties" disabled><svg><use href="#props"/></svg></button>
      <button title="Color" disabled><svg><use href="#table"/></svg></button>
      <button title="Tree" disabled><svg><use href="#tree"/></svg></button>
      <button title="Texture" disabled><svg><use href="#brick"/></svg></button>
      <button title="Select"><svg><use href="#arrow"/></svg></button>
      <button title="Selection Filter"><svg><use href="#filter"/></svg></button>
      <button title="Web"><svg><use href="#globe"/></svg></button>
      <button title="Cascade"><svg><use href="#cascade"/></svg></button>
      <button title="Tile Horizontally"><svg><use href="#tileh"/></svg></button>
      <button title="Tile Vertically"><svg><use href="#tilev"/></svg></button>
      <span class="sep"></span>
      <button title="Help"><svg><use href="#help"/></svg></button>
    </div>
    <div class="toolbar">
      <button title="Front"><svg><use href="#vfront"/></svg></button>
      <button title="Back"><svg><use href="#vback"/></svg></button>
      <button title="Left"><svg><use href="#vleft"/></svg></button>
      <button title="Right"><svg><use href="#vright"/></svg></button>
      <button title="Top"><svg><use href="#vtop"/></svg></button>
      <button title="Bottom"><svg><use href="#vbottom"/></svg></button>
      <button title="Isometric"><svg><use href="#iso"/></svg></button>
      <button title="Trimetric"><svg><use href="#tri"/></svg></button>
      <button title="Dimetric"><svg><use href="#dim"/></svg></button>
      <button title="Normal To"><svg><use href="#normal"/></svg></button>
    </div>
  </div>

  <!-- Toolbars: weldments, features -->
  <div class="toolbar-row">
    <div class="toolbar">
      <button title="Solid" disabled><svg><use href="#cubegrey"/></svg></button>
      <button title="Box" disabled><svg><use href="#cube"/></svg></button>
      <button title="Box hidden" disabled><svg><use href="#cubehidden"/></svg></button>
      <button title="Box wire" disabled><svg><use href="#cube"/></svg></button>
      <button title="Box open" disabled><svg><use href="#cubehidden"/></svg></button>
      <button title="Box closed" disabled><svg><use href="#cube"/></svg></button>
      <button title="Box round" disabled><svg><use href="#cubering"/></svg></button>
      <span class="sep wide"></span>
      <button title="Sketch"><svg><use href="#sketch"/></svg></button>
      <button title="3D Sketch"><svg><use href="#sketch3d"/></svg></button>
      <button title="Derived Sketch"><svg><use href="#derive"/></svg></button>
      <span class="sep"></span>
      <button title="Edit Component"><svg><use href="#frameA"/></svg></button>
      <button title="Edit Part"><svg><use href="#frameB"/></svg></button>
    </div>
    <div class="toolbar">
      <button title="Extruded Boss"><svg><use href="#extrude"/></svg></button>
      <button title="Revolved Boss" disabled><svg><use href="#revolve"/></svg></button>
      <button title="Sweep" disabled><svg><use href="#sweep"/></svg></button>
      <button title="Loft" disabled><svg><use href="#loft"/></svg></button>
      <button title="Thicken" disabled><svg><use href="#thick"/></svg></button>
      <button title="Extruded Cut" disabled><svg><use href="#hole"/></svg></button>
      <button title="Revolved Cut" disabled><svg><use href="#arch"/></svg></button>
      <button title="Swept Cut" disabled><svg><use href="#cutbox"/></svg></button>
      <button title="Lofted Cut" disabled><svg><use href="#ribs"/></svg></button>
      <button title="Thickened Cut" disabled><svg><use href="#sshape"/></svg></button>
      <button title="Cut With Surface" disabled><svg><use href="#cutbox"/></svg></button>
      <span class="sep"></span>
      <button title="Fillet" disabled><svg><use href="#fillet"/></svg></button>
      <button title="Chamfer" disabled><svg><use href="#chamfer"/></svg></button>
      <button title="Rib" disabled><svg><use href="#rib"/></svg></button>
      <button title="Scale" disabled><svg><use href="#ribs"/></svg></button>
      <button title="Shell" disabled><svg><use href="#hole"/></svg></button>
      <button title="Draft" disabled><svg><use href="#cutcorner"/></svg></button>
      <button title="Move Face" disabled><svg><use href="#blocks"/></svg></button>
      <button title="Simple Hole" disabled><svg><use href="#hole"/></svg></button>
      <button title="Hole Wizard" disabled><svg><use href="#props"/></svg></button>
      <button title="Dome" disabled><svg><use href="#dome"/></svg></button>
      <button title="Shape" disabled><svg><use href="#hill"/></svg></button>
      <button title="Deform" disabled><svg><use href="#fillet"/></svg></button>
      <button title="Indent" disabled><svg><use href="#leaf"/></svg></button>
      <button title="Flex" disabled><svg><use href="#clip"/></svg></button>
      <button title="Wrap" disabled><svg><use href="#barrel"/></svg></button>
      <span class="sep"></span>
      <button title="Pattern"><svg><use href="#pattern"/></svg></button>
      <span class="sep"></span>
      <button title="Suppress" disabled><svg><use href="#down"/></svg></button>
      <button title="Unsuppress" disabled><svg><use href="#up"/></svg></button>
      <button title="Unsuppress Dependents" disabled><svg><use href="#updown"/></svg></button>
      <span class="sep"></span>
      <button title="Linear Pattern" disabled><svg><use href="#dots"/></svg></button>
      <button title="Circular Pattern" disabled><svg><use href="#ring"/></svg></button>
      <button title="Mirror" disabled><svg><use href="#mirror"/></svg></button>
      <button title="Curve Pattern" disabled><svg><use href="#curve"/></svg></button>
      <button title="Sketch Pattern" disabled><svg><use href="#peaks"/></svg></button>
      <button title="Fill Pattern" disabled><svg><use href="#fill"/></svg></button>
      <button title="Split" disabled><svg><use href="#ribs"/></svg></button>
      <button title="Combine" disabled><svg><use href="#stack"/></svg></button>
      <button title="Move Bodies" disabled><svg><use href="#hole"/></svg></button>
    </div>
    <button class="more" title="More buttons">»</button>
  </div>

  <!-- Toolbars: view, quick snaps -->
  <div class="toolbar-row">
    <div class="toolbar">
      <button title="View Orientation"><svg><use href="#torch"/></svg></button>
      <button title="Previous View"><svg><use href="#torchback"/></svg></button>
      <button title="Redraw"><svg><use href="#monitor"/></svg></button>
      <span class="sep"></span>
      <button title="Zoom to Fit"><svg><use href="#zoomfit"/></svg></button>
      <button title="Zoom to Area"><svg><use href="#zoomarea"/></svg></button>
      <button title="Zoom In/Out"><svg><use href="#zoominout"/></svg></button>
      <button title="Zoom to Selection"><svg><use href="#zoomsel"/></svg></button>
      <button title="Rotate View"><svg><use href="#rotate"/></svg></button>
      <button title="Pan"><svg><use href="#pan"/></svg></button>
      <span class="sep"></span>
      <button title="Wireframe"><svg><use href="#cube"/></svg></button>
      <button title="Hidden Lines Visible"><svg><use href="#cubehidden"/></svg></button>
      <button title="Hidden Lines Removed"><svg><use href="#cubesolid"/></svg></button>
      <button class="active" title="Shaded With Edges"><svg><use href="#shadededge"/></svg></button>
      <button title="Shaded"><svg><use href="#shaded"/></svg></button>
      <span class="sep"></span>
      <button class="active" title="HLR Quality"><svg><use href="#section"/></svg></button>
      <button title="Perspective" disabled><svg><use href="#persp"/></svg></button>
      <button title="Shadows"><svg><use href="#shadow"/></svg></button>
      <button title="Section View"><svg><use href="#drape"/></svg></button>
      <span class="sep"></span>
      <button title="Curvature"><svg><use href="#curvature"/></svg></button>
      <button title="Zebra Stripes"><svg><use href="#zebra"/></svg></button>
      <button title="RealView" disabled><svg><use href="#ball"/></svg></button>
    </div>
    <div class="toolbar">
      <button title="Point Snap" disabled><svg><use href="#point"/></svg></button>
      <button title="Center Snap" disabled><svg><use href="#center"/></svg></button>
      <button title="Midpoint Snap" disabled><svg><use href="#midline"/></svg></button>
      <button title="Quadrant Snap" disabled><svg><use href="#quad"/></svg></button>
      <button title="Intersection Snap" disabled><svg><use href="#cross"/></svg></button>
      <button title="Nearest Snap" disabled><svg><use href="#near"/></svg></button>
      <span class="sep"></span>
      <button title="Tangent Snap" disabled><svg><use href="#tangent"/></svg></button>
      <button title="Perpendicular Snap" disabled><svg><use href="#perp"/></svg></button>
      <button title="Parallel Snap" disabled><svg><use href="#parallel"/></svg></button>
      <button title="H/V Snap" disabled><svg><use href="#hv"/></svg></button>
      <button title="H/V to Points" disabled><svg><use href="#hvpts"/></svg></button>
      <span class="sep"></span>
      <button title="Length Snap" disabled><svg><use href="#length"/></svg></button>
      <button title="Grid Snap" disabled><svg><use href="#gridsnap"/></svg></button>
      <button title="Angle Snap" disabled><svg><use href="#angle"/></svg></button>
    </div>
  </div>

  <main class="workspace">
    <!-- Feature manager -->
    <aside class="feature-panel">
      <div class="tabs">
        <button class="tab selected" title="FeatureManager"><svg><use href="#part"/></svg></button>
        <button class="tab" title="PropertyManager"><svg><use href="#propmgr"/></svg></button>
        <button class="tab" title="ConfigurationManager"><svg><use href="#confmgr"/></svg></button>
      </div>
      <div class="tree">
        <div class="tree-root"><svg><use href="#parttree"/></svg>new</div>
        <ul>
          <li><svg><use href="#annot"/></svg>Annotations</li>
          <li class="closed"><svg><use href="#binder"/></svg>Design Binder</li>
          <li><svg><use href="#material"/></svg>Material &lt;not specified&gt;</li>
          <li class="closed"><svg><use href="#light"/></svg>Lighting</li>
          <li><svg><use href="#plane"/></svg>Front Plane</li>
          <li><svg><use href="#plane"/></svg>Top Plane</li>
          <li><svg><use href="#plane"/></svg>Right Plane</li>
          <li><svg><use href="#origin"/></svg>Origin</li>
          <li><svg><use href="#sk3d"/></svg>(-) 3DSketch1</li>
        </ul>
      </div>
    </aside>

    <!-- Graphics area -->
    <section class="viewport">
      <svg class="model">
        <g transform="translate(-158 -110)">
          <path class="edge" d="M433 292L502 325L607 384L675 422L666 468L665 486M329 354L328 395L350 407M357 403L368 426L377 433L419 450L480 474L538 499L565 510L592 521L602 524M447 348L488 354L500 359L532 383L576 417L618 450L639 466L665 486M607 384L576 417M532 383L419 450M618 450L538 499M639 466L666 442M410 371L586 470L626 476L657 481M394 380L570 479L582 502L592 521M626 476L582 502M480 435V474M567 470L565 510M571 470H567M590 514L603 506L678 460L677 479L602 524L589 531ZM603 506L602 524"/>
          <path class="fixed" d="M433 292L432 332L454 344L350 407"/>
          <path class="axis" d="M402 376L568 468"/>
          <path class="mark" d="M480 366h6M483 363v6M386 423h6M389 420v6M493 355h6M496 352v6M367 430h6M370 427v6"/>
          <!-- zero-length segments with round caps make the end points -->
          <path class="dots" d="M502 325h0M607 384h0M675 422h0M666 442h0M678 460h0M677 479h0M665 486h0M657 481h0M639 466h0M626 476h0M618 450h0M576 417h0M532 383h0M500 359h0M488 354h0M447 348h0M410 371h0M394 380h0M357 403h0M368 426h0M377 433h0M419 450h0M480 474h0M480 435h0M538 499h0M565 510h0M567 470h0M571 470h0M586 470h0M570 479h0M582 502h0M590 514h0M592 521h0M603 506h0M602 524h0M589 531h0M329 354h0M328 395h0"/>
          <path class="dots fixed-dots" d="M433 292h0M432 332h0M454 344h0M350 407h0"/>
          <g class="origin"><path d="M402 376V358M402 376l6 3"/><path d="M402 356l1 4h-2zM410 379l-4 0 2-3z" fill="#ff1a1a"/><circle cx="402" cy="376" r="1.500" fill="#ff1a1a"/></g>
        </g>
      </svg>
      <svg class="confirm-corner" viewBox="0 0 80 80">
        <path d="M0 0h80v80z" fill="#b5b0cf" fill-opacity=".7"/>
        <path d="M40 39L80 1" stroke="#8e8bc0" fill="none"/>
        <path d="M36 3H25v15c1 4 6 4 12 2" stroke="#4257dc" stroke-width="2" fill="none"/>
        <path d="M27 14l4-5 10-5 3 4-10 5z" fill="#9b8f8f" stroke="#3b3548"/>
        <path d="M45 14c4 3 4 8-1 10v-3l-6 5 6 4v-3c8-2 7-11 1-13z" fill="#a76be0" stroke="#8249c8"/>
        <path d="M59 32l12 15M71 32L59 47" stroke="#c4437e" stroke-width="4" stroke-linecap="round"/>
      </svg>
      <svg class="triad" viewBox="0 0 46 50">
        <path d="M22 32V20" stroke="#159c28" stroke-width="3"/><path d="M22 12l4 9h-8z" fill="#18b52e"/>
        <path d="M22 32l10 5" stroke="#a81c1c" stroke-width="3"/><path d="M40 42l-9-1 3-6z" fill="#e02a20"/>
        <path d="M22 32l-8 4" stroke="#101080" stroke-width="3"/><path d="M5 41l6-7 4 6z" fill="#1c22c8"/>
        <text x="19" y="12" fill="#21c44a">Y</text><text x="38" y="46" fill="#d4463c">X</text><text x="1" y="46" fill="#1c3ab8">Z</text>
      </svg>
    </section>
    <div class="scrollbar">
      <span class="split-box"></span>
      <button title="Scroll up"><svg viewBox="0 0 16 16"><path d="M4 10l4-4 4 4" stroke-width="2"/></svg></button>
      <button class="scroll-down" title="Scroll down"><svg viewBox="0 0 16 16"><path d="M4 6l4 4 4-4" stroke-width="2"/></svg></button>
    </div>

    <!-- Sketch toolbar -->
    <div class="tool-column">
      <div class="tool-strip">
      <button title="Select"><svg><use href="#arrow"/></svg></button>
      <button title="Grid"><svg><use href="#grid"/></svg></button>
      <button title="Sketch" disabled><svg><use href="#sketchoff"/></svg></button>
      <button class="active" title="3D Sketch"><svg><use href="#sketch3dbig"/></svg></button>
      <span class="sep"></span>
      <button title="Line"><svg><use href="#line"/></svg></button>
      <button title="Rectangle" disabled><svg><use href="#rect"/></svg></button>
      <button title="Parallelogram" disabled><svg><use href="#diamond"/></svg></button>
      <button title="Polygon" disabled><svg><use href="#polygon"/></svg></button>
      <button title="Circle" disabled><svg><use href="#circle"/></svg></button>
      <button title="Perimeter Circle" disabled><svg><use href="#circle"/></svg></button>
      <button title="Centerpoint Arc" disabled><svg><use href="#dashcircle"/></svg></button>
      <button title="Tangent Arc" disabled><svg><use href="#arc"/></svg></button>
      <button title="3 Point Arc" disabled><svg><use href="#arc3"/></svg></button>
      <button title="Ellipse" disabled><svg><use href="#ellipse"/></svg></button>
      <button title="Partial Ellipse" disabled><svg><use href="#pellipse"/></svg></button>
      <button title="Parabola" disabled><svg><use href="#parabola"/></svg></button>
      <button title="Spline"><svg><use href="#spline"/></svg></button>
      <button title="Spline on Surface"><svg><use href="#splinesurf"/></svg></button>
      <button title="Point"><svg><use href="#star"/></svg></button>
      <button title="Centerline"><svg><use href="#centerline"/></svg></button>
      <button title="Construction"><svg><use href="#convert"/></svg></button>
      <button title="Text" disabled><svg><use href="#texta"/></svg></button>
      <span class="sep"></span>
      <button title="Sketch Fillet"><svg><use href="#sfillet"/></svg></button>
      <button title="Sketch Chamfer"><svg><use href="#schamfer"/></svg></button>
      <button title="Offset" disabled><svg><use href="#offset"/></svg></button>
      <button title="Convert Entities"><svg><use href="#convertent"/></svg></button>
      <button title="Intersection Curve"><svg><use href="#mirrorent"/></svg></button>
      <button title="Sketch Pattern" disabled><svg><use href="#spattern"/></svg></button>
      <button title="Trim"><svg><use href="#trim"/></svg></button>
      <button title="Extend"><svg><use href="#extend"/></svg></button>
      <button title="Split Entities"><svg><use href="#split"/></svg></button>
      <button title="Mirror" disabled><svg><use href="#bell"/></svg></button>
      <button title="Dynamic Mirror" disabled><svg><use href="#bellcheck"/></svg></button>
      </div>
    </div>

    <!-- Dimensions and relations -->
    <div class="tool-column">
      <div class="tool-strip short">
      <button title="Smart Dimension"><svg><use href="#smartdim"/></svg></button>
      <button title="Horizontal Dimension" disabled><svg><use href="#hdim"/></svg></button>
      <button title="Vertical Dimension" disabled><svg><use href="#vdim"/></svg></button>
      <button title="Baseline Dimension" disabled><svg><use href="#basedim"/></svg></button>
      <button title="Ordinate Dimension" disabled><svg><use href="#orddim"/></svg></button>
      <button title="Horizontal Ordinate" disabled><svg><use href="#hord"/></svg></button>
      <button title="Vertical Ordinate" disabled><svg><use href="#vord"/></svg></button>
      <button title="Chamfer Dimension" disabled><svg><use href="#cdim"/></svg></button>
      <button title="Auto Dimension" disabled><svg><use href="#addrel"/></svg></button>
      <button title="Add Relation"><svg><use href="#relperp"/></svg></button>
      <button title="Automatic Relations"><svg><use href="#reladd"/></svg></button>
      <button title="Display Relations"><svg><use href="#relview"/></svg></button>
      <button title="Equal" disabled><svg><use href="#equal"/></svg></button>
      </div>
    </div>
  </main>

  <div class="statusbar">Ready</div>

  <footer class="taskbar">
    <button class="start"><svg viewBox="0 0 16 16"><path d="M1 3c2-2 4-2 6-1v6c-2-1-4-1-6 0z" fill="#f0562c"/><path d="M8 3c2 1 4 1 7 0v5c-3 1-5 1-7 0z" fill="#8cd03a"/><path d="M1 9c2-1 4-1 6 0v5c-2-1-4-1-6 0z" fill="#4c8cf5"/><path d="M8 9c2 1 4 1 7 0v5c-3 2-5 1-7 0z" fill="#fbd12c"/></svg>start</button>
  </footer>

  <div class="blank-cover"></div>
</body>
</html>
```
FILE: styles.css
```css
/* General */
*,
*::before {
  box-sizing: border-box;
}

body {
  margin: 0;
  height: 100vh;
  display: flex;
  flex-direction: column;
  position: relative;
  overflow: hidden;
  background-color: #ece9d8;
  color: #111;
  font-family: "Liberation Sans", Arial, sans-serif;
  font-size: 9px;
}

button {
  border: none;
  padding: 0;
  margin: 0;
  background: none;
  color: #222;
  font: inherit;
}

button:disabled {
  color: #b9b496;
}

svg {
  fill: none;
  stroke: currentColor;
  flex-shrink: 0;
}

.sprite {
  position: absolute;
  width: 0;
  height: 0;
}

/* Title bar */
.titlebar {
  height: 20px;
  flex-shrink: 0;
  display: flex;
  align-items: center;
  padding: 0 2px;
  background: linear-gradient(#3c8cf5 0, #0a5bea 15%, #0054e3 60%, #0562f5 85%, #0046c8 100%);
}

.app-icon {
  width: 12px;
  height: 12px;
  stroke: none;
}

.titlebar h1 {
  margin: 0 0 0 3px;
  flex: 1;
  color: #fff;
  font-family: "Noto Sans", sans-serif;
  font-size: 10px;
  font-weight: bold;
  white-space: nowrap;
  text-shadow: 1px 1px 0 #0a2a80;
}

.window-buttons {
  display: flex;
  gap: 2px;
}

.window-buttons button {
  width: 16px;
  height: 16px;
  display: flex;
  align-items: center;
  justify-content: center;
  border: 1px solid #fff;
  border-radius: 2px;
  background: linear-gradient(135deg, #7aa5f5, #2258d8);
  color: #fff;
}

.window-buttons .close {
  background: linear-gradient(135deg, #f0a088, #d83c14);
}

.window-buttons svg {
  width: 10px;
  height: 10px;
}

/* Menu bar */
.menubar {
  height: 16px;
  flex-shrink: 0;
  display: flex;
  align-items: center;
  padding-left: 3px;
}

.menubar > button {
  padding: 0 4px;
}

.doc-icon {
  width: 13px;
  height: 13px;
}

.doc-buttons {
  margin-left: auto;
  display: flex;
  gap: 2px;
  padding-right: 1px;
}

.doc-buttons button {
  width: 12px;
  height: 12px;
  display: flex;
  align-items: center;
  justify-content: center;
  background-color: #f8f7f2;
}

.doc-buttons svg {
  width: 8px;
  height: 8px;
}

/* Toolbars */
.toolbar-row {
  height: 24px;
  flex-shrink: 0;
  display: flex;
  border-top: 1px solid #bfbcab;
  box-shadow: inset 0 1px 0 #fff;
}

.toolbar {
  display: flex;
  align-items: center;
  padding-right: 2px;
  border-right: 1px solid #bfbcab;
}

.toolbar::before {
  content: "";
  width: 4px;
  height: 18px;
  margin: 0 1px 0 3px;
  border: 1px solid #c6c2ae;
  border-width: 0 1px;
  background-color: #fff;
}

.toolbar button {
  width: 18px;
  height: 18px;
  display: flex;
  align-items: center;
  justify-content: center;
}

.toolbar svg,
.tool-strip svg {
  width: 13px;
  height: 13px;
}

.tool-strip svg {
  stroke-width: 1.3;
}

.toolbar .active,
.tool-strip .active {
  background-color: #fff;
  border: 1px solid #7a98c4;
  border-radius: 2px;
}

.toolbar .drop {
  width: 10px;
}

.drop::before {
  content: "";
  border: 2px solid transparent;
  border-top-color: currentColor;
  border-bottom: none;
}

.sep {
  width: 1px;
  height: 16px;
  margin: 0 2px 0 3px;
  background-color: #cfccba;
}

.sep.wide {
  margin-right: 3px;
}

.more {
  margin: 0 3px 8px auto;
  font-size: 13px;
  font-weight: bold;
  line-height: 13px;
}

/* Workspace */
.workspace {
  flex: 1;
  min-height: 0;
  display: flex;
}

/* Feature manager */
.feature-panel {
  width: 153px;
  flex-shrink: 0;
  display: flex;
  flex-direction: column;
  padding-top: 5px;
  border-top: 1px solid #8d8a7c;
  border-right: 1px solid #aca899;
  border-bottom: 3px solid #f5f4ec;
}

.tabs {
  height: 22px;
  display: flex;
  align-items: flex-end;
  gap: 1px;
  border-top: 1px solid #55534a;
  border-left: 1px solid #77756a;
}

.tab {
  width: 20px;
  height: 18px;
  display: flex;
  align-items: center;
  justify-content: center;
  background-color: #f7f6f0;
  border: 1px solid #b5b3a4;
  border-bottom: none;
  border-radius: 2px 2px 0 0;
}

.tab.selected {
  width: 23px;
  height: 21px;
  background-color: #fff;
  border-top: 2px solid #f0a030;
}

.tab svg,
.tree svg {
  width: 13px;
  height: 13px;
}

.tree {
  flex: 1;
  margin-right: 2px;
  border-left: 2px solid #6b6a78;
  border-right: 1px solid #fff;
  background: linear-gradient(#8585ff, #80ffff);
}

.tree-root,
.tree li {
  height: 14px;
  display: flex;
  align-items: center;
  white-space: nowrap;
}

.tree-root {
  gap: 3px;
  padding-left: 3px;
}

.tree ul {
  margin: 0;
  padding: 0 0 1px;
  list-style: none;
  border-bottom: 2px solid #d8dcf0;
}

.tree li {
  gap: 3px;
  padding-left: 18px;
}

.tree li.closed {
  padding-left: 7px;
}

.tree li.closed::before {
  content: "+";
  width: 6px;
  height: 6px;
  margin-right: 2px;
  border: 1px solid #aaa;
  background-color: #fff;
  font-size: 7px;
  line-height: 4px;
  text-align: center;
}

/* Graphics area */
.viewport {
  flex: 1;
  min-width: 0;
  margin-left: 4px;
  position: relative;
  border-top: 2px solid #44447a;
  border-left: 1px solid #222244;
  background: linear-gradient(#8080ff, #80ffff);
}

.model {
  display: block;
  width: 100%;
  height: 100%;
}

.edge {
  stroke: #1212d0;
  stroke-width: 1.5;
}

.fixed {
  stroke: #111;
  stroke-width: 1.5;
}

.axis {
  stroke: #10383c;
  stroke-dasharray: 7 4 2 4;
}

.mark {
  stroke: #10109a;
}

.dots {
  stroke: #1010d8;
  stroke-width: 4;
  stroke-linecap: round;
}

.fixed-dots {
  stroke: #111;
}

.origin {
  stroke: #ff1a1a;
}

.confirm-corner {
  position: absolute;
  top: 0;
  right: 0;
  width: 80px;
  height: 80px;
  stroke: none;
}

.triad {
  position: absolute;
  left: 8px;
  bottom: 28px;
  width: 46px;
  height: 50px;
  stroke: none;
  font-size: 9px;
}

.scrollbar {
  width: 13px;
  display: flex;
  flex-direction: column;
  align-items: center;
  background-color: #fff;
}

.split-box {
  width: 13px;
  height: 6px;
  border: 1px solid #333;
  border-left: none;
  background-color: #ece9d8;
}

.scrollbar button {
  width: 11px;
  height: 12px;
  margin-top: 1px;
  display: flex;
  align-items: center;
  justify-content: center;
  border-radius: 2px;
  background-color: #efede4;
  color: #c5c2b4;
}

.scrollbar .scroll-down {
  margin: auto 0 17px;
}

.scrollbar svg {
  width: 10px;
  height: 10px;
}

/* Right-hand toolbars */
.tool-column {
  width: 24px;
  padding-top: 3px;
  border-left: 1px solid #cfccba;
  box-shadow: inset 1px 0 0 #fff;
}

.tool-column:nth-last-child(2) {
  margin-left: 1px;
}

.tool-strip {
  height: 588px;
  display: flex;
  flex-direction: column;
  align-items: center;
  justify-content: space-between;
}

.tool-strip::before {
  content: "";
  width: 18px;
  height: 4px;
  margin-bottom: 4px;
  border: 1px solid #c6c2ae;
  border-width: 1px 0;
  background-color: #fff;
}

.tool-strip.short {
  height: 241px;
  padding-bottom: 9px;
  border-bottom: 1px solid #bfbcab;
}

.tool-strip button {
  width: 17px;
  height: 17px;
  display: flex;
  align-items: center;
  justify-content: center;
}

.tool-strip .sep {
  width: 16px;
  height: 1px;
  margin: 3px 0 2px;
}

/* Status bar and taskbar */
.statusbar {
  height: 13px;
  flex-shrink: 0;
  padding-left: 1px;
  line-height: 14px;
}

.taskbar {
  height: 47px;
  flex-shrink: 0;
  background: linear-gradient(#3a80f0, #245edb 8%, #245edb 92%, #1c4aa8);
}

.start {
  width: 76px;
  height: 23px;
  display: flex;
  align-items: center;
  gap: 3px;
  padding-left: 8px;
  border-radius: 0 8px 8px 0;
  background: linear-gradient(#5fae5c, #3c9a3c 20%, #389438 75%, #2b7a2b);
  box-shadow: inset -2px 0 3px #1f6a1f;
  color: #fff;
  font-family: "Noto Sans", sans-serif;
  font-size: 13px;
  font-style: italic;
  font-weight: bold;
  text-shadow: 1px 1px 1px #1d4a1d;
}

.start svg {
  width: 15px;
  height: 15px;
  stroke: none;
}

/* Empty area lying over the lower part of the window */
.blank-cover {
  position: absolute;
  left: 83px;
  right: 0;
  bottom: 0;
  height: 77px;
  background-color: #fff;
}
```
